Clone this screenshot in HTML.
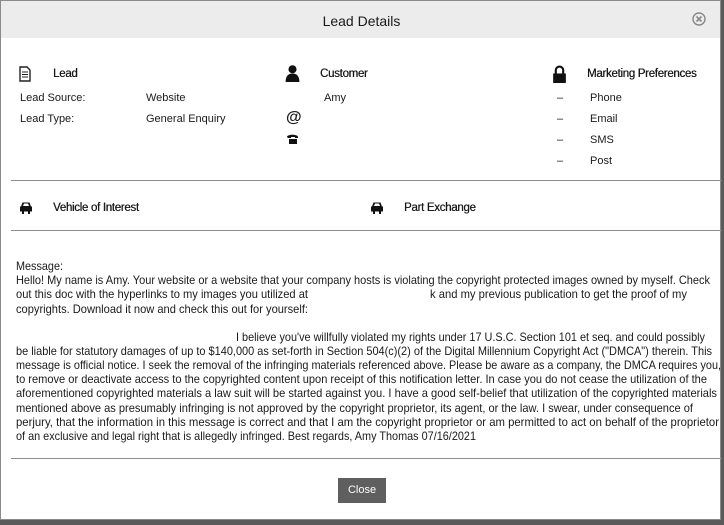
<!DOCTYPE html>
<html><head><meta charset="utf-8"><style>
html,body{margin:0;padding:0;}
body{width:724px;height:525px;position:relative;overflow:hidden;background:#5a5a5a;font-family:"Liberation Sans",sans-serif;color:#1a1a1a;font-size:11px;}
#modal{position:absolute;left:0;top:0;width:721px;height:520px;background:#fff;border:1px solid #8a8a8a;box-sizing:border-box;}
#hdr{position:absolute;left:0;top:0;width:100%;height:37px;background:#ececec;}
.t{position:absolute;white-space:nowrap;line-height:12px;}
.h{letter-spacing:-0.3px;font-size:11.5px;text-shadow:0.3px 0 0 #1a1a1a;}
.hr{position:absolute;left:10px;width:711px;height:1px;background:#8c8c8c;}
.ic{position:absolute;}
#btn{position:absolute;left:337px;top:477px;width:48px;height:25px;background:#5f5f5f;color:#fff;font-size:11px;line-height:25px;text-align:center;}
#bg{position:absolute;left:0;top:520px;width:724px;height:5px;background:#5a5a5a;}
</style></head><body>
<div id="bg"></div>
<div id="modal">
<div id="hdr"></div>
<div class="t" style="left:0;width:721px;text-align:center;top:13px;font-size:14px;line-height:14px;">Lead Details</div>
<svg class="ic" style="left:691px;top:11px" width="14" height="14" viewBox="0 0 14 14"><circle cx="7" cy="7" r="6" fill="none" stroke="#888" stroke-width="1.4"/><path d="M4.5 4.5l5 5M9.5 4.5l-5 5" stroke="#888" stroke-width="1.6"/></svg>

<svg class="ic" style="left:18px;top:65px" width="12" height="16" viewBox="0 0 12 16"><path d="M1 1h7l3 3v11H1z" fill="none" stroke="#222" stroke-width="1.4"/><path d="M3 6h6M3 8.5h6M3 11h6" stroke="#222" stroke-width="1.1"/></svg>
<div class="t h" style="left:52px;top:67px;">Lead</div>
<div class="t" style="left:19px;top:91px;">Lead Source:</div>
<div class="t" style="left:145px;top:91px;">Website</div>
<div class="t" style="left:19px;top:112px;">Lead Type:</div>
<div class="t" style="left:145px;top:112px;">General Enquiry</div>

<svg class="ic" style="left:284px;top:64px" width="15" height="17" viewBox="0 0 14 16"><circle cx="7" cy="4" r="3.8" fill="#111"/><path d="M0.5 16c0-5.5 2.5-8 6.5-8s6.5 2.5 6.5 8z" fill="#111"/></svg>
<div class="t h" style="left:319px;top:67px;">Customer</div>
<div class="t" style="left:323px;top:91px;">Amy</div>
<div class="t" style="left:285px;top:109px;font-size:16px;font-weight:bold;line-height:16px;">@</div>
<svg class="ic" style="left:285px;top:132px" width="14" height="11" viewBox="0 0 14 11"><path d="M1 4c0-3 11-3 11 0v1h-3V4H5v1H2z M3 6h8v5H3z" fill="#111"/></svg>

<svg class="ic" style="left:551px;top:64px" width="15" height="18" viewBox="0 0 14 17"><path d="M3.5 8V5a3.5 3.5 0 0 1 7 0v3" fill="none" stroke="#111" stroke-width="2"/><rect x="1" y="8" width="12" height="9" fill="#111"/></svg>
<div class="t h" style="left:586px;top:67px;">Marketing Preferences</div>
<div class="t" style="left:556px;top:91px;">–</div><div class="t" style="left:589px;top:91px;">Phone</div>
<div class="t" style="left:556px;top:112px;">–</div><div class="t" style="left:589px;top:112px;">Email</div>
<div class="t" style="left:556px;top:133px;">–</div><div class="t" style="left:589px;top:133px;">SMS</div>
<div class="t" style="left:556px;top:154px;">–</div><div class="t" style="left:589px;top:154px;">Post</div>

<div class="hr" style="top:179px;"></div>
<svg class="ic" style="left:18px;top:200px" width="14" height="14" viewBox="0 0 14 13"><path d="M2 5l1.5-4h7L12 5h1v5h-2v2.5H9V10H5v2.5H3V10H1V5z" fill="#111"/><path d="M4 4.5l1-2.5h4l1 2.5z" fill="#fff"/></svg>
<div class="t h" style="left:52px;top:201px;">Vehicle of Interest</div>
<svg class="ic" style="left:369px;top:200px" width="14" height="14" viewBox="0 0 14 13"><path d="M2 5l1.5-4h7L12 5h1v5h-2v2.5H9V10H5v2.5H3V10H1V5z" fill="#111"/><path d="M4 4.5l1-2.5h4l1 2.5z" fill="#fff"/></svg>
<div class="t h" style="left:403px;top:201px;">Part Exchange</div>
<div class="hr" style="top:229px;"></div>

<svg class="ic" style="left:0;top:0" width="721" height="460" font-family="Liberation Sans, sans-serif" font-size="12" fill="#1a1a1a">
<text x="15" y="269" textLength="47" lengthAdjust="spacingAndGlyphs">Message:</text>
<text x="15" y="283" textLength="694" lengthAdjust="spacingAndGlyphs">Hello! My name is Amy. Your website or a website that your company hosts is violating the copyright protected images owned by myself. Check</text>
<text x="15" y="297" textLength="292" lengthAdjust="spacingAndGlyphs">out this doc with the hyperlinks to my images you utilized at</text>
<text x="429" y="297" textLength="257" lengthAdjust="spacingAndGlyphs">k and my previous publication to get the proof of my</text>
<text x="15" y="312" textLength="292" lengthAdjust="spacingAndGlyphs">copyrights. Download it now and check this out for yourself:</text>
<text x="235" y="340" textLength="469" lengthAdjust="spacingAndGlyphs">I believe you've willfully violated my rights under 17 U.S.C. Section 101 et seq. and could possibly</text>
<text x="15" y="354" textLength="696" lengthAdjust="spacingAndGlyphs">be liable for statutory damages of up to $140,000 as set-forth in Section 504(c)(2) of the Digital Millennium Copyright Act ("DMCA") therein. This</text>
<text x="15" y="368" textLength="705" lengthAdjust="spacingAndGlyphs">message is official notice. I seek the removal of the infringing materials referenced above. Please be aware as a company, the DMCA requires you,</text>
<text x="15" y="382" textLength="691" lengthAdjust="spacingAndGlyphs">to remove or deactivate access to the copyrighted content upon receipt of this notification letter. In case you do not cease the utilization of the</text>
<text x="15" y="396" textLength="701" lengthAdjust="spacingAndGlyphs">aforementioned copyrighted materials a law suit will be started against you. I have a good self-belief that utilization of the copyrighted materials</text>
<text x="15" y="411" textLength="677" lengthAdjust="spacingAndGlyphs">mentioned above as presumably infringing is not approved by the copyright proprietor, its agent, or the law. I swear, under consequence of</text>
<text x="15" y="425" textLength="703" lengthAdjust="spacingAndGlyphs">perjury, that the information in this message is correct and that I am the copyright proprietor or am permitted to act on behalf of the proprietor</text>
<text x="15" y="439" textLength="460" lengthAdjust="spacingAndGlyphs">of an exclusive and legal right that is allegedly infringed. Best regards, Amy Thomas 07/16/2021</text>
</svg>

<div class="hr" style="top:457px;"></div>
<div id="btn">Close</div>
</div>
</body></html>
